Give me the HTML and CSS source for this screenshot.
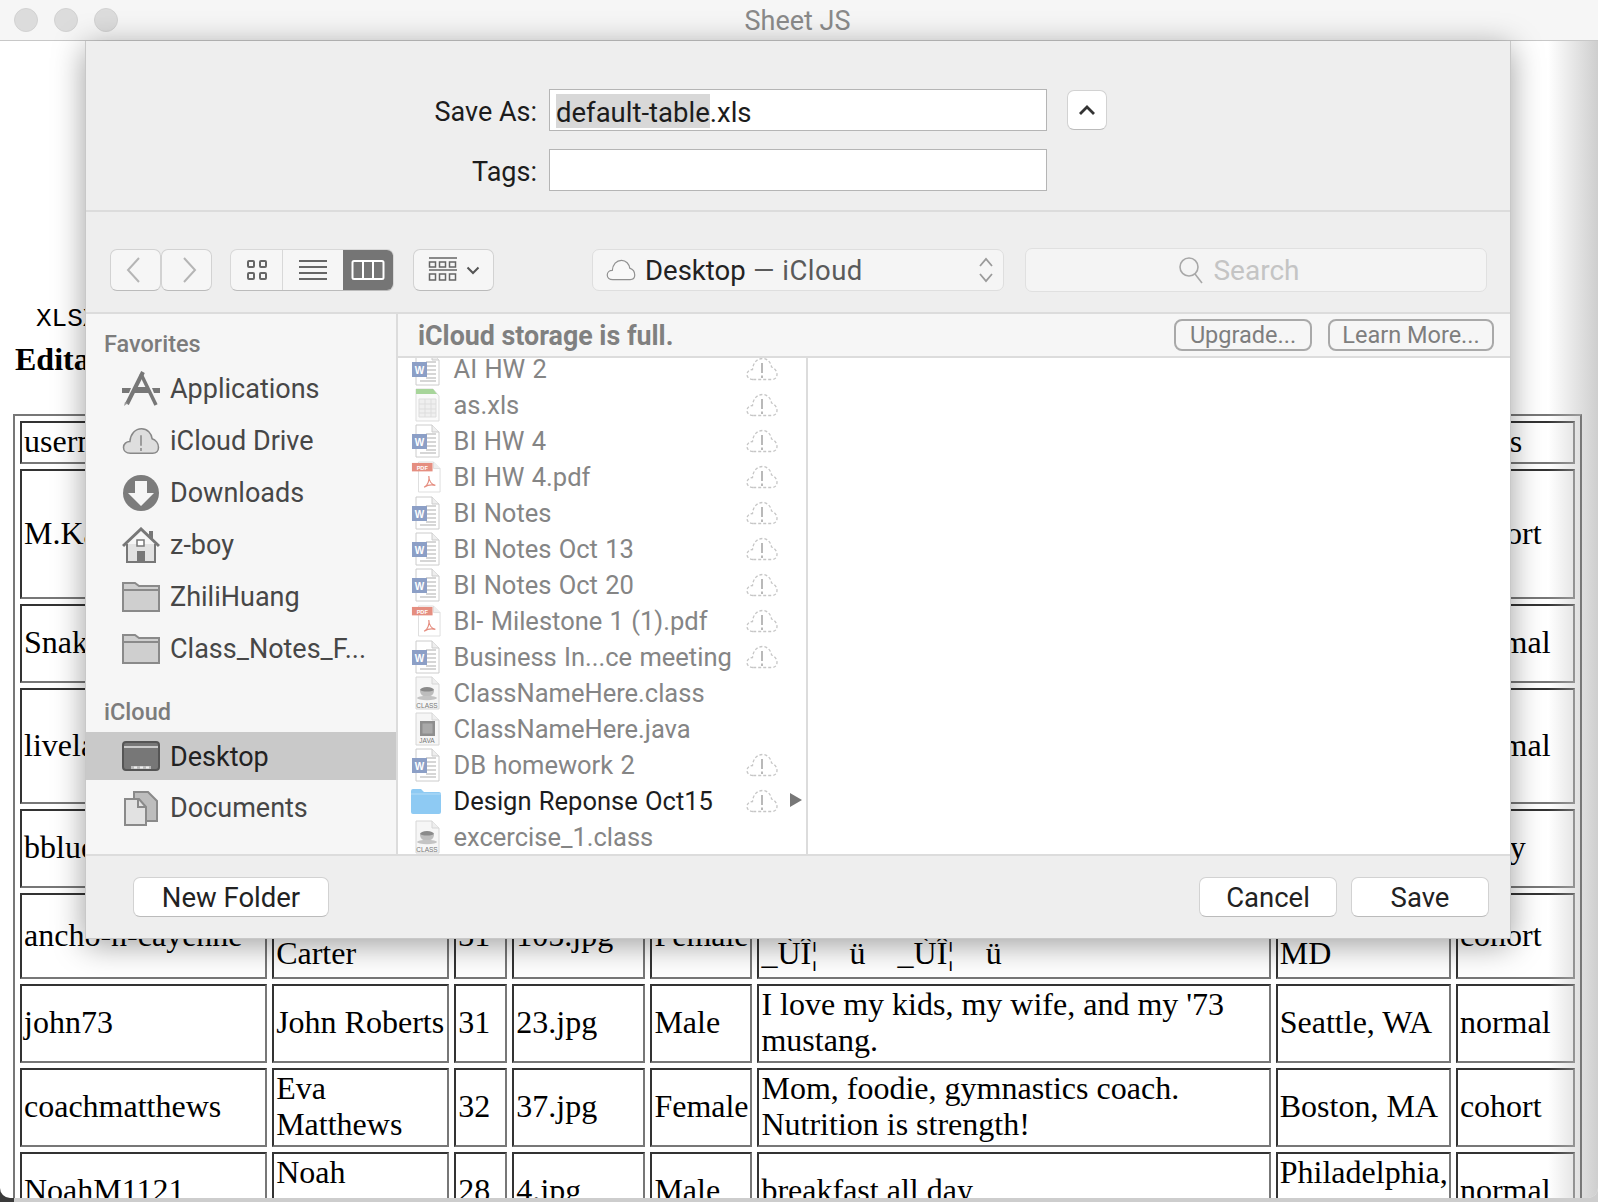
FILE: index.html
```html
<!DOCTYPE html>
<html>
<head>
  <meta charset="UTF-8">
  <title>Sheet JS</title>
  <link rel="stylesheet" href="styles.css">
</head>
<body>
  <svg class="defs" width="0" height="0">
    <symbol id="i-word" viewBox="0 0 30 34">
      <path d="M5 1h16l7 7v25H5z" fill="#fff" stroke="#ccc"/>
      <path d="M21 1v7h7" fill="#eee" stroke="#ccc"/>
      <path d="M15 10h10M15 14h10M15 18h10M15 22h10M15 26h10M9 29h16" stroke="#c9c9c9" stroke-width="1.5"/>
      <path d="M1 10h15v15l-15 0z" fill="#8c9fc6"/>
      <text x="8.5" y="22" class="word-w">W</text>
    </symbol>
    <symbol id="i-pdf" viewBox="0 0 32 34">
      <path d="M8 1h16l7 7v25H8z" fill="#fff" stroke="#ddd"/>
      <path d="M24 1v7h7" fill="#eee" stroke="#ddd"/>
      <rect x="1" y="2" width="22" height="9" fill="#e58e80"/>
      <text x="12" y="9.4" class="pdf-t">PDF</text>
      <path d="M14 28c4-2 6-8 5-12c0 5 3 9 7 10c-4-1-9 0-12 2z" fill="none" stroke="#e58e80" stroke-width="1.3"/>
    </symbol>
    <symbol id="i-xls" viewBox="0 0 30 34">
      <path d="M5 1h17l6 7v25H5z" fill="#fafafa" stroke="#ddd"/>
      <path d="M5 1h17l4 5H5z" fill="#a7d59a"/>
      <path d="M8 11h17v18H8z" fill="#efefef" stroke="#ddd"/>
      <path d="M14 11v18M20 11v18M8 16h17M8 21h17M8 25h17" stroke="#ddd"/>
    </symbol>
    <symbol id="i-class" viewBox="0 0 30 34">
      <path d="M5 1h16l7 7v25H5z" fill="#f6f6f6" stroke="#d6d6d6"/>
      <path d="M21 1v7h7" fill="#eee" stroke="#d6d6d6"/>
      <ellipse cx="16" cy="14" rx="7" ry="3" fill="#8a8a8a"/>
      <path d="M9 14c0 5 3 6.500 7 6.500s7-1.500 7-6.500c-3 2-11 2-14 0z" fill="#bdbdbd"/>
      <ellipse cx="16" cy="22" rx="10" ry="2.200" fill="#c4c4c4"/>
      <text x="16" y="31.5" class="class-t">CLASS</text>
    </symbol>
    <symbol id="i-java" viewBox="0 0 30 34">
      <path d="M5 1h16l7 7v25H5z" fill="#f6f6f6" stroke="#d6d6d6"/>
      <path d="M21 1v7h7" fill="#eee" stroke="#d6d6d6"/>
      <rect x="9" y="9" width="15" height="15" fill="#8e8e8e"/>
      <rect x="11.500" y="11.500" width="10" height="10" fill="#a9a9a9"/>
      <text x="16" y="31" class="class-t">JAVA</text>
    </symbol>
    <symbol id="i-nocloud" viewBox="0 0 32 24">
      <path d="M7 22.500C3 22.500 1 20 1 17.500C1 14.500 3.500 12.500 6.500 12.500C7 6 11 1.500 16.500 1.500C21.500 1.500 25 5.500 25.500 10C28.500 11 31 14 31 17.500C31 20.500 29 22.500 26 22.500Z" fill="none" stroke="#c6c6c6" stroke-width="1.300" stroke-dasharray="3 2"/>
      <path d="M16 6v10M16 18.500v2.500" stroke="#a8a8a8" stroke-width="1.600"/>
    </symbol>
    <symbol id="i-cloud" viewBox="0 0 32 24">
      <path d="M7 22.500C3 22.500 1 20 1 17.500C1 14.500 3.500 12.500 6.500 12.500C7 6 11 1.500 16.500 1.500C21.500 1.500 25 5.500 25.500 10C28.500 11 31 14 31 17.500C31 20.500 29 22.500 26 22.500Z" fill="#f8f8f8" stroke="#909090" stroke-width="1.300"/>
    </symbol>
  </svg>

  <div class="window">
    <header class="titlebar">
      <div class="lights"><span></span><span></span><span></span></div>
      <div class="title">Sheet JS</div>
    </header>

    <main class="page">
      <pre class="mono">XLSX</pre>
      <h2>Editable Table</h2>
      <table class="data">
        <tr class="r1"><td>username</td><td></td><td></td><td></td><td></td><td></td><td></td><td>class</td></tr>
        <tr class="r2"><td>M.Kat</td><td></td><td></td><td></td><td></td><td></td><td></td><td>cohort</td></tr>
        <tr class="r3"><td>Snake</td><td></td><td></td><td></td><td></td><td></td><td></td><td>normal</td></tr>
        <tr class="r4"><td>livelaugh</td><td></td><td></td><td></td><td></td><td></td><td></td><td>normal</td></tr>
        <tr class="r3"><td>bblue</td><td></td><td></td><td></td><td></td><td></td><td></td><td>party</td></tr>
        <tr class="r6"><td>ancho-n-cayenne</td><td>Ann<br>Carter</td><td>31</td><td>105.jpg</td><td>Female</td><td class="bio">_ÙÎ¦ &nbsp; &nbsp;ü &nbsp; &nbsp;_ÙÎ¦ &nbsp; &nbsp;ü<br>_ÙÎ¦ &nbsp; &nbsp;ü &nbsp; &nbsp;_ÙÎ¦ &nbsp; &nbsp;ü</td><td>Baltimore,<br>MD</td><td>cohort</td></tr>
        <tr class="r7"><td>john73</td><td>John Roberts</td><td>31</td><td>23.jpg</td><td>Male</td><td>I love my kids, my wife, and my '73<br>mustang.</td><td>Seattle, WA</td><td>normal</td></tr>
        <tr class="r7"><td>coachmatthews</td><td>Eva<br>Matthews</td><td>32</td><td>37.jpg</td><td>Female</td><td>Mom, foodie, gymnastics coach.<br>Nutrition is strength!</td><td>Boston, MA</td><td>cohort</td></tr>
        <tr class="r7"><td>NoahM1121</td><td>Noah<br>Martin</td><td>28</td><td>4.jpg</td><td>Male</td><td>breakfast all day</td><td>Philadelphia,<br>PA</td><td>normal</td></tr>
      </table>
    </main>

    <div class="edge-shade"></div>

    <section class="sheet">
      <div class="form">
        <label class="form-label">Save As:</label>
        <div class="field"><span class="sel">default-table</span><span>.xls</span></div>
        <button class="disclose">
          <svg width="18" height="11" viewBox="0 0 18 11"><path d="M2 9l7-7 7 7" fill="none" stroke="#333" stroke-width="2.800"/></svg>
        </button>
        <label class="form-label">Tags:</label>
        <div class="field"></div>
      </div>

      <div class="toolbar">
        <div class="seg nav">
          <button class="tool"><svg class="chev-l" width="16" height="28" viewBox="0 0 16 28"><path d="M14 2L3 14l11 12" fill="none" stroke="#b5b5b5" stroke-width="2"/></svg></button>
          <button class="tool"><svg class="chev-r" width="16" height="28" viewBox="0 0 16 28"><path d="M2 2l11 12L2 26" fill="none" stroke="#b5b5b5" stroke-width="2"/></svg></button>
        </div>
        <div class="seg views">
          <button class="view v1"><svg width="22" height="22" viewBox="0 0 22 22" fill="none" stroke="#666" stroke-width="2"><rect x="2" y="2" width="6" height="6" rx="1"/><rect x="14" y="2" width="6" height="6" rx="1"/><rect x="2" y="14" width="6" height="6" rx="1"/><rect x="14" y="14" width="6" height="6" rx="1"/></svg></button>
          <button class="view v2"><svg width="30" height="22" viewBox="0 0 30 22" stroke="#666" stroke-width="2"><path d="M1 2h28M1 8h28M1 14h28M1 20h28"/></svg></button>
          <button class="view v3 on"><svg width="34" height="22" viewBox="0 0 34 22" fill="none" stroke="#fff" stroke-width="2"><rect x="1.500" y="2" width="31" height="18" rx="1.500"/><path d="M12 2v18M22 2v18"/></svg></button>
        </div>
        <button class="arrange">
          <svg width="30" height="26" viewBox="0 0 30 26" fill="none" stroke="#666" stroke-width="1.500"><path d="M1 1h28M1 13h28"/><rect x="1.500" y="5" width="6" height="5"/><rect x="11.500" y="5" width="6" height="5"/><rect x="21.500" y="5" width="6" height="5"/><rect x="1.500" y="17" width="6" height="6"/><rect x="11.500" y="17" width="6" height="6"/><rect x="21.500" y="17" width="6" height="6"/></svg>
          <svg width="14" height="9" viewBox="0 0 14 9"><path d="M1.500 1.500L7 7l5.500-5.500" fill="none" stroke="#555" stroke-width="2"/></svg>
        </button>
        <button class="path">
          <svg class="path-cloud" width="30" height="22"><use href="#i-cloud"/></svg>
          <span class="path-name">Desktop</span><span class="path-sub">&nbsp;— iCloud</span>
          <svg class="updown" width="16" height="28" viewBox="0 0 16 28" fill="none" stroke="#9a9a9a" stroke-width="1.800"><path d="M2 10l6-7 6 7M2 18l6 7 6-7"/></svg>
        </button>
        <div class="search">
          <svg width="26" height="28" viewBox="0 0 26 28" fill="none" stroke="#a8a8a8" stroke-width="1.600"><circle cx="11" cy="11" r="9"/><path d="M17 18l7 9"/></svg>
          <span>Search</span>
        </div>
      </div>

      <div class="browser">
        <aside class="sidebar">
          <div class="side-head">Favorites</div>
          <div class="side-item">
            <svg width="38" height="36" viewBox="0 0 38 36"><path d="M21 1L5 33" stroke="#777" stroke-width="4" fill="none"/><path d="M19 3l15 31" stroke="#777" stroke-width="3.500" fill="none"/><path d="M0 17h9l-2 5H0zM30 17h8v5h-6zM13 16h12l2.500 6h-17z" fill="#777"/><path d="M2 35l1-4 3 1z" fill="#999"/></svg>
            <span>Applications</span>
          </div>
          <div class="side-item">
            <svg width="38" height="28" viewBox="0 0 32 24"><path d="M7 22.500C3 22.500 1 20 1 17.500C1 14.500 3.500 12.500 6.500 12.500C7 6 11 1.500 16.500 1.500C21.500 1.500 25 5.500 25.500 10C28.500 11 31 14 31 17.500C31 20.500 29 22.500 26 22.500Z" fill="#dedede" stroke="#888" stroke-width="1.300"/><path d="M16 7v9M16 18v2.500" stroke="#888" stroke-width="1.300"/></svg>
            <span>iCloud Drive</span>
          </div>
          <div class="side-item">
            <svg width="38" height="38" viewBox="0 0 38 38"><circle cx="19" cy="19" r="18" fill="#7c7c7c"/><path d="M13 7h12v12h7L19 32 6 19h7z" fill="#f6f6f6"/></svg>
            <span>Downloads</span>
          </div>
          <div class="side-item">
            <svg width="38" height="36" viewBox="0 0 38 36"><path d="M5 17v18h28V17" fill="#e2e2e2" stroke="#777" stroke-width="2"/><path d="M1 19L19 2l18 17" fill="none" stroke="#777" stroke-width="3"/><path d="M27 4h4v8l-4-4z" fill="#777"/><rect x="15" y="13" width="7" height="6" fill="#fff" stroke="#777" stroke-width="1.500"/><rect x="15" y="24" width="8" height="11" fill="#777"/></svg>
            <span>z-boy</span>
          </div>
          <div class="side-item">
            <svg width="38" height="30"><path d="M1 29V1h12l4 3h20v25z M1 8h36" fill="#cfcfcf" stroke="#8a8a8a" stroke-width="2"/></svg>
            <span>ZhiliHuang</span>
          </div>
          <div class="side-item">
            <svg width="38" height="30"><path d="M1 29V1h12l4 3h20v25z M1 8h36" fill="#cfcfcf" stroke="#8a8a8a" stroke-width="2"/></svg>
            <span>Class_Notes_F...</span>
          </div>
          <div class="side-head second">iCloud</div>
          <div class="side-item active">
            <svg width="38" height="30" viewBox="0 0 38 30"><rect x="1" y="1" width="36" height="28" rx="3" fill="#777" stroke="#555" stroke-width="2"/><path d="M2 6h34" stroke="#e6e6e6" stroke-width="1.500"/><path d="M9 28v-3h20v3" fill="#bbb"/><path d="M12 25.500h3v2h-3zM18 25.500h3v2h-3zM24 25.500h3v2h-3z" fill="#eee"/></svg>
            <span>Desktop</span>
          </div>
          <div class="side-item">
            <svg width="38" height="36" viewBox="0 0 38 36"><path d="M12 8v-6h14l9 9v20h-13" fill="#bdbdbd" stroke="#8a8a8a" stroke-width="2"/><path d="M3 9h14l7 8v18H3z" fill="#e2e2e2" stroke="#8a8a8a" stroke-width="2"/><path d="M16 9v8h8" fill="none" stroke="#8a8a8a" stroke-width="2"/></svg>
            <span>Documents</span>
          </div>
        </aside>

        <div class="main">
          <div class="banner">
            <strong>iCloud storage is full.</strong>
            <button class="pill up">Upgrade...</button>
            <button class="pill learn">Learn More...</button>
          </div>
          <div class="panes">
            <div class="files">
              <div class="file"><svg class="ficon"><use href="#i-word"/></svg><span class="fname">AI HW 2</span><svg class="fcloud"><use href="#i-nocloud"/></svg></div>
              <div class="file"><svg class="ficon"><use href="#i-xls"/></svg><span class="fname">as.xls</span><svg class="fcloud"><use href="#i-nocloud"/></svg></div>
              <div class="file"><svg class="ficon"><use href="#i-word"/></svg><span class="fname">BI HW 4</span><svg class="fcloud"><use href="#i-nocloud"/></svg></div>
              <div class="file"><svg class="ficon"><use href="#i-pdf"/></svg><span class="fname">BI HW 4.pdf</span><svg class="fcloud"><use href="#i-nocloud"/></svg></div>
              <div class="file"><svg class="ficon"><use href="#i-word"/></svg><span class="fname">BI Notes</span><svg class="fcloud"><use href="#i-nocloud"/></svg></div>
              <div class="file"><svg class="ficon"><use href="#i-word"/></svg><span class="fname">BI Notes Oct 13</span><svg class="fcloud"><use href="#i-nocloud"/></svg></div>
              <div class="file"><svg class="ficon"><use href="#i-word"/></svg><span class="fname">BI Notes Oct 20</span><svg class="fcloud"><use href="#i-nocloud"/></svg></div>
              <div class="file"><svg class="ficon"><use href="#i-pdf"/></svg><span class="fname">BI- Milestone 1 (1).pdf</span><svg class="fcloud"><use href="#i-nocloud"/></svg></div>
              <div class="file"><svg class="ficon"><use href="#i-word"/></svg><span class="fname">Business In...ce meeting</span><svg class="fcloud"><use href="#i-nocloud"/></svg></div>
              <div class="file"><svg class="ficon"><use href="#i-class"/></svg><span class="fname">ClassNameHere.class</span></div>
              <div class="file"><svg class="ficon"><use href="#i-java"/></svg><span class="fname">ClassNameHere.java</span></div>
              <div class="file"><svg class="ficon"><use href="#i-word"/></svg><span class="fname">DB homework 2</span><svg class="fcloud"><use href="#i-nocloud"/></svg></div>
              <div class="file folder">
                <svg class="ficon" viewBox="0 0 30 26"><path d="M0 3a2 2 0 0 1 2-2h8l3 3h15a2 2 0 0 1 2 2v18a2 2 0 0 1-2 2H2a2 2 0 0 1-2-2z" fill="#8ecaf3"/><path d="M0 6h30" stroke="#b4dcf7"/></svg>
                <span class="fname">Design Reponse Oct15</span><svg class="fcloud"><use href="#i-nocloud"/></svg>
                <svg class="farrow" width="12" height="14" viewBox="0 0 12 14"><path d="M0 0l12 7-12 7z" fill="#777"/></svg>
              </div>
              <div class="file"><svg class="ficon"><use href="#i-class"/></svg><span class="fname">excercise_1.class</span></div>
            </div>
            <div class="preview"></div>
          </div>
        </div>
      </div>

      <div class="footer">
        <button class="btn new">New Folder</button>
        <button class="btn cancel">Cancel</button>
        <button class="btn save">Save</button>
      </div>
    </section>
  </div>
  <div class="strip"><span>#4Y1 1S1 48873 : 4</span></div>
</body>
</html>
```

FILE: styles.css
```css
/* Page behind the sheet */
html, body {
  margin: 0;
  padding: 0;
  height: 1202px;
  overflow: hidden;
  font-family: Roboto, sans-serif;
}
body {
  background: linear-gradient(to right, #3a3a3a 14px, #cdcdcd 14px);
}
.defs {
  position: absolute;
}
.window {
  position: relative;
  height: 1198px;
  overflow: hidden;
  background: #fff;
  border-radius: 0 0 10px 10px;
}
.titlebar {
  display: flex;
  align-items: center;
  height: 40px;
  background: #f6f6f6;
  border-bottom: 1px solid #c8c8c8;
}
.lights {
  display: flex;
  gap: 16px;
  padding-left: 14px;
}
.lights span {
  width: 24px;
  height: 24px;
  border-radius: 50%;
  background: #dcdcdc;
  border: 1px solid #d2d2d2;
  box-sizing: border-box;
}
.title {
  position: absolute;
  left: 0;
  right: 3px;
  top: 0;
  line-height: 43px;
  text-align: center;
  font-size: 27px;
  color: #8a8a8a;
}
.page {
  font-family: "Liberation Serif", serif;
  color: #000;
  padding: 0 0 0 13px;
}
.mono {
  margin: 0;
  padding: 263px 0 0 23px;
  font-family: "Liberation Mono", monospace;
  font-size: 26px;
  line-height: 30px;
}
h2 {
  margin: 5px 0 0 2px;
  font-size: 32px;
  line-height: 40px;
}
.data {
  table-layout: fixed;
  width: 1569px;
  margin-top: 35px;
  border-collapse: separate;
  border-spacing: 5px;
  border: 2px solid;
  border-color: #777 #333 #333 #777;
  font-size: 32px;
  line-height: 36px;
}
.data td {
  padding: 0 2px 3px;
  border: 2px solid;
  border-color: #333 #777 #777 #333;
  overflow: hidden;
  white-space: nowrap;
}
.data td:nth-child(1) { width: 239px; }
.data td:nth-child(2) { width: 169px; }
.data td:nth-child(3) { width: 45px; }
.data td:nth-child(4) { width: 125px; }
.data td:nth-child(5) { width: 94px; }
.data td:nth-child(6) { width: 505px; }
.data td:nth-child(7) { width: 167px; }
.data td:nth-child(8) { width: 111px; }
.r1 { height: 43px; }
.r2 { height: 130px; }
.r3 { height: 79px; }
.r4 { height: 116px; }
.r6 { height: 86px; }
.r7 { height: 79px; }
.edge-shade {
  position: absolute;
  top: 41px;
  right: 0;
  bottom: 0;
  width: 50px;
  background: linear-gradient(to right, rgba(190,190,190,0), rgba(190,190,190,0.75));
}

/* Save sheet */
.sheet {
  position: absolute;
  left: 85px;
  top: 41px;
  width: 1426px;
  height: 898px;
  display: flex;
  flex-direction: column;
  background: #eeeeee;
  border: solid #c8c8c8;
  border-width: 0 1px 1px 1px;
  box-sizing: border-box;
  box-shadow: 0 6px 30px rgba(0,0,0,0.38);
  color: #222;
}
button {
  font-family: Roboto, sans-serif;
  background: #fff;
  border: 1px solid #d2d2d2;
  border-bottom-color: #bbb;
  border-radius: 7px;
  padding: 0;
  box-sizing: border-box;
}
.form {
  display: grid;
  grid-template-columns: 451px 498px 61px;
  grid-auto-rows: 42px;
  row-gap: 18px;
  column-gap: 12px;
  align-items: center;
  height: 121px;
  padding-top: 48px;
  border-bottom: 2px solid #dcdcdc;
  box-sizing: content-box;
  font-size: 27.500px;
}
.form-label {
  padding-top: 3px;
  font-size: 27px;
  text-align: right;
  color: #1c1c1c;
}
.field {
  display: flex;
  align-items: flex-start;
  height: 42px;
  line-height: 38px;
  padding: 4px 0 0 6px;
  background: #fff;
  border: 1px solid #b5b5b5;
  box-sizing: border-box;
  color: #1c1c1c;
}
.sel {
  height: 34px;
  background: #d8d8d8;
}
.disclose {
  width: 40px;
  height: 40px;
  margin-left: 8px;
  display: flex;
  align-items: center;
  justify-content: center;
}
.toolbar {
  display: flex;
  align-items: flex-start;
  height: 102px;
  padding: 37px 23px 0 24px;
  border-bottom: 2px solid #dcdcdc;
  box-sizing: border-box;
}
.seg {
  display: flex;
  height: 42px;
}
.nav {
  margin-right: 18px;
}
.tool {
  width: 51px;
  height: 42px;
  background: #f6f6f6;
  display: flex;
  align-items: center;
  justify-content: center;
}
.chev-l { margin-right: 6px; }
.chev-r { margin-left: 6px; }
.views {
  margin-right: 19px;
  width: 164px;
  border-radius: 7px;
  border: 1px solid #d8d8d8;
  border-bottom-color: #bbb;
  overflow: hidden;
  box-sizing: border-box;
  background: #f6f6f6;
}
.view {
  height: 100%;
  border: 0;
  border-radius: 0;
  background: none;
  display: flex;
  align-items: center;
  justify-content: center;
}
.v1 { width: 53px; border-right: 1px solid #d8d8d8; }
.v2 { width: 60px; }
.v3 { width: 51px; }
.v3.on { background: #757575; }
.arrange {
  width: 81px;
  height: 42px;
  background: #f6f6f6;
  display: flex;
  align-items: center;
  justify-content: center;
  gap: 8px;
}
.path {
  display: flex;
  align-items: center;
  width: 412px;
  height: 42px;
  margin-left: 98px;
  margin-right: 21px;
  padding: 0 9px 0 13px;
  background: #f5f5f5;
  border-color: #dedede;
  font-size: 27.500px;
}
.path-cloud {
  margin-right: 9px;
}
.path-name {
  color: #222;
}
.path-sub {
  letter-spacing: 0.5px;
  color: #5a5a5a;
}
.updown {
  margin-left: auto;
}
.search {
  display: flex;
  align-items: center;
  justify-content: center;
  gap: 9px;
  flex: 1;
  height: 44px;
  margin-top: -1px;
  padding-right: 34px;
  background: #f4f4f4;
  border: 1px solid #e0e0e0;
  border-radius: 7px;
  box-sizing: border-box;
  font-size: 28px;
  color: #c4c4c4;
}

/* Sidebar and file list */
.browser {
  display: flex;
  flex: 1;
  min-height: 0;
}
.sidebar {
  width: 312px;
  padding-top: 16px;
  background: #f6f6f6;
  border-right: 2px solid #dcdcdc;
  display: flex;
  flex-direction: column;
  gap: 4px;
  box-sizing: border-box;
}
.side-head {
  height: 28px;
  line-height: 28px;
  margin: 0 0 3px 18px;
  font-size: 23.500px;
  font-weight: 500;
  color: #7c7c7c;
}
.side-head.second {
  margin: 21px 0 2px 18px;
}
.side-item {
  display: flex;
  align-items: center;
  gap: 10px;
  height: 48px;
  flex: none;
  padding-left: 36px;
  font-size: 27px;
  color: #474747;
}
.side-item.active {
  background: #c9c9c9;
  color: #222;
}
.side-item.active span {
  padding-top: 1px;
}
.main {
  flex: 1;
  display: flex;
  flex-direction: column;
  min-width: 0;
}
.banner {
  display: flex;
  align-items: center;
  height: 44px;
  flex: none;
  padding: 0 16px 0 20px;
  background: #f6f6f6;
  border-bottom: 2px solid #dcdcdc;
  box-sizing: border-box;
}
.banner strong {
  flex: 1;
  padding-top: 1px;
  font-size: 26.800px;
  font-weight: 700;
  color: #808080;
}
.pill {
  height: 32px;
  background: none;
  border: 2px solid #a9a9a9;
  border-radius: 8px;
  font-size: 23.500px;
  color: #7e7e7e;
}
.up { width: 138px; margin-right: 16px; }
.learn { width: 166px; }
.panes {
  flex: 1;
  display: flex;
  min-height: 0;
  background: #fff;
}
.files {
  width: 410px;
  border-right: 2px solid #dcdcdc;
  overflow: hidden;
  box-sizing: border-box;
}
.file {
  display: flex;
  align-items: center;
  position: relative;
  height: 36px;
  padding-left: 13px;
  font-size: 25.500px;
  word-spacing: 1px;
  color: #858585;
}
.file:first-child {
  margin-top: -7px;
}
.file.folder {
  color: #1d1d1d;
}
.ficon {
  width: 30px;
  height: 34px;
  flex: none;
}
.fname {
  margin-left: 12.500px;
}
.fcloud {
  position: absolute;
  left: 348px;
  top: 6px;
  width: 32px;
  height: 24px;
}
.farrow {
  position: absolute;
  left: 392px;
  top: 10px;
}
.preview {
  flex: 1;
}
.footer {
  display: flex;
  align-items: center;
  gap: 14px;
  height: 84px;
  flex: none;
  padding: 0 21px 0 47px;
  border-top: 2px solid #dcdcdc;
  box-sizing: border-box;
}
.btn {
  height: 40px;
  font-size: 27.500px;
  color: #222;
}
.new { width: 196px; margin-right: auto; }
.cancel { width: 138px; }
.save { width: 138px; }

/* icon text */
.word-w { font: 700 10px "Liberation Sans", sans-serif; fill: #fff; text-anchor: middle; }
.pdf-t { font: 700 6px "Liberation Sans", sans-serif; fill: #fff; text-anchor: middle; }
.class-t { font: 6.500px "Liberation Sans", sans-serif; fill: #777; text-anchor: middle; }

/* Bottom strip */
.strip {
  height: 4px;
  overflow: hidden;
  padding-left: 75px;
  font: 26px/30px "Liberation Serif", serif;
  color: #333;
}
```
